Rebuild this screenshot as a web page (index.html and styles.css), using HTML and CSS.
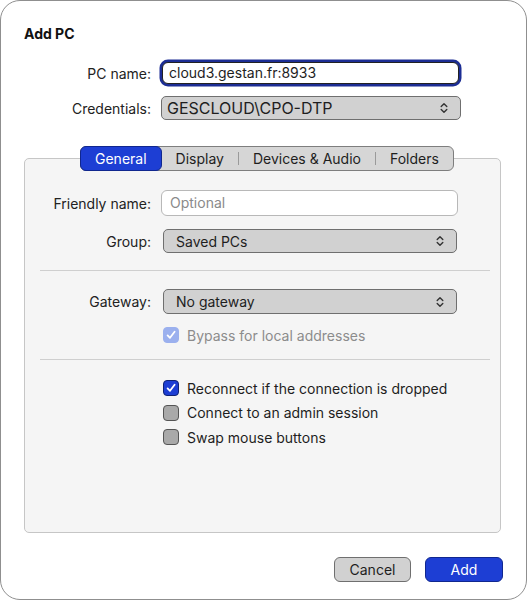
FILE: index.html
```html
<!DOCTYPE html>
<html lang="en">

<head>
  <meta charset="UTF-8">
  <title>Add PC</title>
  <link rel="stylesheet" href="styles.css">
</head>

<body>
  <div class="window">
    <div class="title">Add PC</div>

    <div class="form top-form">
      <label class="label">PC name:</label>
      <div class="field focused">cloud3.gestan.fr:8933</div>

      <label class="label">Credentials:</label>
      <div class="select wide">
        <span>GESCLOUD\CPO-DTP</span>
        <svg class="chevrons" width="8" height="12" viewBox="0 0 8 12"><path d="M1.2 4.6 L4 1.8 L6.8 4.6 M1.2 7.4 L4 10.2 L6.8 7.4" /></svg>
      </div>
    </div>

    <div class="tab-box">
      <div class="tabs">
        <div class="tab active">General</div>
        <div class="tab">Display</div>
        <div class="tab-sep"></div>
        <div class="tab">Devices &amp; Audio</div>
        <div class="tab-sep"></div>
        <div class="tab">Folders</div>
      </div>

      <div class="form inner-form">
        <label class="label">Friendly name:</label>
        <div class="field placeholder">Optional</div>

        <label class="label">Group:</label>
        <div class="select">
          <span>Saved PCs</span>
          <svg class="chevrons" width="8" height="12" viewBox="0 0 8 12"><path d="M1.2 4.6 L4 1.8 L6.8 4.6 M1.2 7.4 L4 10.2 L6.8 7.4" /></svg>
        </div>
      </div>

      <div class="separator first"></div>

      <div class="form gateway-form">
        <label class="label">Gateway:</label>
        <div class="select">
          <span>No gateway</span>
          <svg class="chevrons" width="8" height="12" viewBox="0 0 8 12"><path d="M1.2 4.6 L4 1.8 L6.8 4.6 M1.2 7.4 L4 10.2 L6.8 7.4" /></svg>
        </div>

        <div></div>
        <div class="check-row disabled">
          <span class="checkbox checked">
            <svg width="12" height="12" viewBox="0 0 12 12"><path d="M2.6 6.4 L5 8.8 L9.6 2.8" /></svg>
          </span>
          Bypass for local addresses
        </div>
      </div>

      <div class="separator second"></div>

      <div class="options">
        <div class="check-row">
          <span class="checkbox checked">
            <svg width="12" height="12" viewBox="0 0 12 12"><path d="M2.6 6.4 L5 8.8 L9.6 2.8" /></svg>
          </span>
          Reconnect if the connection is dropped
        </div>
        <div class="check-row">
          <span class="checkbox"></span>
          Connect to an admin session
        </div>
        <div class="check-row">
          <span class="checkbox"></span>
          Swap mouse buttons
        </div>
      </div>
    </div>

    <div class="buttons">
      <button class="btn">Cancel</button>
      <button class="btn primary">Add</button>
    </div>
  </div>
</body>

</html>
```

FILE: styles.css
```css
* {
  box-sizing: border-box;
}

body {
  margin: 0;
  background: #fff;
  font-family: Inter, "Liberation Sans", Arial, sans-serif;
  font-size: 14px;
  color: #1e1e1e;
}

.window {
  width: 527px;
  height: 600px;
  border: 1px solid #8f8f8f;
  border-radius: 20px;
  padding: 24px 23px 0 23px;
  background: #fff;
}

.title {
  font-weight: bold;
  line-height: 17px;
  color: #111;
}

.form {
  display: grid;
  align-items: center;
}

.top-form {
  margin-top: 20px;
  grid-template-columns: 127px 300px;
  column-gap: 10px;
  row-gap: 12px;
}

.label {
  text-align: right;
  color: #222;
}

.field {
  height: 24px;
  line-height: 22px;
  padding: 0 8px;
  background: #fff;
  border: 1px solid #b8b8b8;
  border-radius: 6px;
}

.field.focused {
  height: 22px;
  line-height: 20px;
  margin: 0 2px 0 1px;
  padding-left: 6px;
  border-color: #222;
  box-shadow: 0 0 0 2.5px #1c2d94;
}

.field.placeholder {
  height: 26px;
  line-height: 24px;
  color: #8a8a8a;
}

.select {
  display: flex;
  align-items: center;
  justify-content: space-between;
  height: 24px;
  padding: 0 12px 0 12px;
  background: #d1d1d1;
  border: 1px solid #6f6f6f;
  border-radius: 5px;
}

.select.wide {
  padding-left: 5px;
  font-size: 16px;
}

.chevrons path {
  fill: none;
  stroke: #333;
  stroke-width: 1.4;
  stroke-linecap: round;
  stroke-linejoin: round;
}

.tab-box {
  width: 477px;
  height: 375px;
  margin-top: 38px;
  padding: 0 10px 0 15px;
  background: #f5f5f5;
  border: 1px solid #c6c6c6;
  border-radius: 5px;
}

.tabs {
  display: flex;
  align-items: center;
  width: max-content;
  height: 25px;
  margin: -13px 0 0 40px;
  background: #d6d6d6;
  border: 1px solid #7e7e7e;
  border-radius: 6px;
}

.tab {
  padding: 0 14px;
  line-height: 23px;
  color: #1e1e1e;
}

.tab.active {
  height: 25px;
  margin: -1px 0 0 -1px;
  background: #1d3ed4;
  border: 1px solid #10278f;
  border-radius: 6px;
  color: #fff;
  line-height: 23px;
}

.tab-sep {
  width: 1px;
  height: 13px;
  background: #9a9a9a;
}

.inner-form,
.gateway-form {
  grid-template-columns: 111px 297px;
  column-gap: 10px;
}

.inner-form {
  margin-top: 19px;
  row-gap: 13px;
}

.inner-form .select {
  margin: 0 1px 0 2px;
}

.separator {
  height: 1px;
  background: #cfcfcf;
}

.separator.first {
  margin-top: 17px;
}

.gateway-form {
  margin-top: 18px;
  row-gap: 11px;
}

.gateway-form .select {
  height: 25px;
  margin: 0 1px 0 2px;
}

.separator.second {
  margin-top: 14px;
}

.options {
  display: flex;
  flex-direction: column;
  gap: 4.5px;
  margin: 18px 0 0 123px;
}

.check-row {
  display: flex;
  align-items: center;
  height: 20px;
  gap: 8px;
  color: #1e1e1e;
}

.gateway-form .check-row {
  margin-left: 2px;
}

.checkbox {
  display: flex;
  align-items: center;
  justify-content: center;
  width: 16px;
  height: 16px;
  background: #a9a9a9;
  border: 1px solid #555;
  border-radius: 4px;
}

.checkbox.checked {
  background: #1d3ed4;
  border-color: #0f2275;
}

.checkbox path {
  fill: none;
  stroke: #fff;
  stroke-width: 1.8;
  stroke-linecap: round;
  stroke-linejoin: round;
}

.check-row.disabled {
  color: #8c8c8c;
}

.check-row.disabled .checkbox {
  background: #9bb0ee;
  border-color: #9bb0ee;
}

.buttons {
  display: flex;
  justify-content: flex-end;
  gap: 14px;
  margin-top: 24px;
}

.btn {
  height: 25px;
  padding: 0;
  font-family: inherit;
  font-size: 14px;
  color: #1e1e1e;
  background: #d1d1d1;
  border: 1px solid #6f6f6f;
  border-radius: 6px;
  width: 77px;
}

.btn.primary {
  width: 78px;
  color: #fff;
  background: #1d3ed4;
  border-color: #10278f;
}
```
